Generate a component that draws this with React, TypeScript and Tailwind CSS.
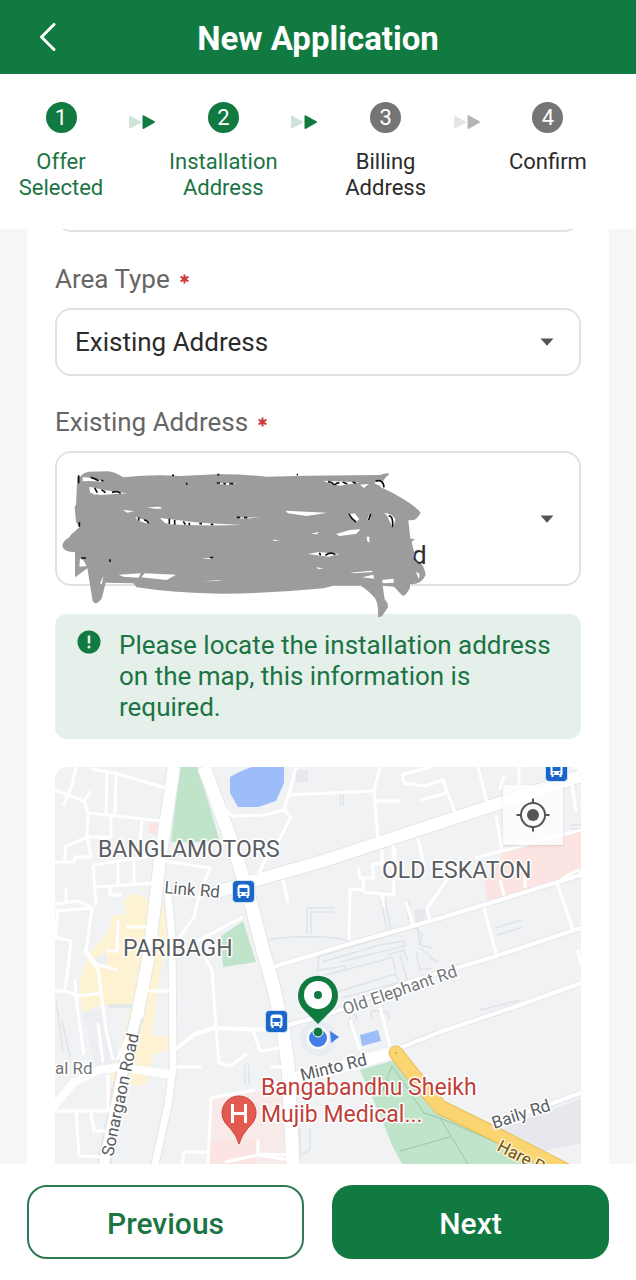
import React, { useState } from 'react';

interface Step {
    label: string;
    done: boolean;
}

const STEPS: Step[] = [
    { label: 'Offer Selected', done: true },
    { label: 'Installation Address', done: true },
    { label: 'Billing Address', done: false },
    { label: 'Confirm', done: false },
];

const StepArrow: React.FC<{ active: boolean }> = ({ active }) => (
    <svg
        width="28"
        height="16"
        viewBox="0 0 28 16"
        aria-hidden="true"
        className={active ? 'text-[#107a40]' : 'text-[#b5b5b5]'}
        fill="currentColor"
    >
        <path d="M1.5 1.5L13 7.5Q14 8 13 8.7L1.5 14.7Q1 15 1 14V2Q1 1 1.5 1.5Z" opacity={active ? 0.2 : 0.35} />
        <path d="M15.5 1.2L26.5 7.3Q27.6 8 26.5 8.7L15.5 14.9Q14.5 15.2 14.5 14V2Q14.5 1 15.5 1.2Z" />
    </svg>
);

const Stepper: React.FC = () => (
    <ol className="flex justify-between bg-white pl-[5px] pr-8 pt-7 pb-7 shrink-0">
        {STEPS.map((step, i) => (
            <React.Fragment key={step.label}>
                {i > 0 && (
                    <li aria-hidden="true" className="pt-3">
                        <StepArrow active={STEPS[i - 1].done} />
                    </li>
                )}
                <li className="w-[112px] flex flex-col items-center gap-4">
                    <span
                        className={`w-[31px] h-[31px] rounded-full flex items-center justify-center text-white text-[22px] leading-none ${
                            step.done ? 'bg-[#107a40]' : 'bg-[#757575]'
                        }`}
                    >
                        {i + 1}
                    </span>
                    <span
                        className={`text-[22px] leading-[26px] text-center ${
                            step.done ? 'text-[#1c7445]' : 'text-[#2b2b2b]'
                        }`}
                    >
                        {step.label}
                    </span>
                </li>
            </React.Fragment>
        ))}
    </ol>
);

const FieldLabel: React.FC<{ htmlFor: string; children: React.ReactNode }> = ({ htmlFor, children }) => (
    <label htmlFor={htmlFor} className="flex items-center gap-[10px] text-[26px] leading-8 text-[#666666]">
        {children}
        <svg width="9" height="10" viewBox="0 0 9 10" aria-hidden="true" stroke="#cf3a3f" strokeWidth="2">
            <path d="M4.5 0.5V9.5M0.6 2.7L8.4 7.3M8.4 2.7L0.6 7.3" />
        </svg>
    </label>
);

const Caret: React.FC = () => (
    <svg
        width="14"
        height="8"
        viewBox="0 0 14 8"
        aria-hidden="true"
        className="absolute right-[27px] top-1/2 -translate-y-1/2 pointer-events-none"
    >
        <path d="M0.5 0.5H13.5L7 7.8Z" fill="#555555" />
    </svg>
);

const Redaction: React.FC = () => (
    <svg
        width="375"
        height="170"
        viewBox="45 33 1125 510"
        aria-hidden="true"
        className="absolute left-0 top-0 pointer-events-none"
    >
        <path
            fill="#9c9c9c"
            d="M112 110L108 195L104 200L108 245L118 262L92 285L88 292Q66 305 67 318Q70 335 105 337L105 412L142 385L158 483Q166 496 175 486Q186 478 188 465L197 428L280 430L290 442Q400 459 545 461Q700 460 850 445L880 437H962Q990 455 1005 475Q1016 492 1014 530Q1022 534 1028 526L1044 502Q1046 490 1034 478L1028 437L1062 440L1086 466Q1092 470 1098 462L1110 445V432Q1142 436 1157 405Q1154 382 1142 368L1125 355L1115 305L1125 297L1111 296L1105 240Q1128 246 1142 218Q1128 198 1060 160L1020 140L1035 115L1048 102Q1042 97 1020 105L800 107L680 110Q600 102 530 103L420 108Q340 102 250 112Q225 96 205 94L145 95Q125 100 120 112Z"
        />
        <g fill="#ffffff">
            <path d="M128 112Q165 112 192 126Q155 122 128 124ZM148 140Q200 152 262 160L180 165L150 158ZM154 140L168 166L156 160ZM322 202L360 200L366 206H344ZM248 209L282 214L262 218ZM286 230L330 246L322 251L292 241ZM360 234L480 248L606 255Q470 258 388 253L374 248ZM578 233L660 232L616 236ZM736 212L862 218L800 228L744 220ZM522 128L590 130L560 135ZM850 122L960 127L900 137L868 130ZM1004 122H1034V142L1006 132ZM960 134L986 132L972 144Z" />
            <path d="M922 224L944 220L958 238L946 247ZM1032 218Q1056 220 1066 238L1060 266L1040 226ZM988 220L992 238L982 240ZM812 281L838 276L830 283ZM888 282L930 270L962 268L948 282L898 288ZM696 299L720 300L704 303ZM918 298L942 300ZM980 290H988V308L982 304ZM804 342L836 336L898 342L866 350ZM484 354L526 354L512 358ZM236 404L302 400L296 413L250 410ZM314 400L408 404L380 420L304 412ZM492 424L550 419L530 423ZM828 382L850 385L836 388ZM856 408L888 404ZM930 398L994 392L1000 396L944 400ZM966 412L1000 404L1002 416ZM1026 420L1060 416L1062 428L1028 430ZM1128 396Q1144 400 1136 416ZM118 380L140 378L130 360L120 356ZM180 430L190 408L186 432Z" />
        </g>
        <g stroke="#111111" strokeWidth="5" fill="none">
            <path d="M116 106V130M152 112Q166 116 176 122M184 120L190 124M164 144L172 158M184 150Q192 152 196 158M216 157Q232 152 242 160M388 236V252M404 240V254M430 244L436 254M448 248V256M478 251H486M512 253H520M296 232V242M312 240Q322 240 326 250M864 125L876 128Q882 138 890 130L898 128M908 126L922 132M938 126L948 130M1006 124Q1030 116 1032 142M926 222Q936 238 948 246M992 222L986 240M1046 228Q1060 226 1058 262M838 338L842 346M856 346Q872 334 886 344M118 246V260M124 354H138M210 358V366M510 353H520M530 129H540M550 130L558 133M568 131H580M590 232H600M612 233H622M396 106H402M532 104H538M770 104H774M440 128V134" />
        </g>
        <text x="1116" y="373" fontSize="78" fill="#2b2b2b" className="font-[Roboto]">
            d
        </text>
        <path d="M1108 296L1124 340L1120 358L1140 376L1110 380Z" fill="#9c9c9c" />
    </svg>
);

const BusStop: React.FC<{ x: number; y: number }> = ({ x, y }) => (
    <g transform={`translate(${x} ${y})`}>
        <rect x="-0.5" y="-0.5" width="22" height="22" rx="4" fill="#1b66c9" stroke="#ffffff" strokeOpacity="0.6" />
        <path
            fill="#ffffff"
            d="M7.500 3.500H13.500Q16.500 3.500 16.500 7V15H15.500V17H13.500V15H7.500V17H5.500V15H4.500V7Q4.500 3.500 7.500 3.500Z"
        />
        <path fill="#1b66c9" d="M6.500 7H14.500V11H6.500Z" />
        <circle cx="7.500" cy="13" r="1" fill="#1b66c9" />
        <circle cx="13.500" cy="13" r="1" fill="#1b66c9" />
    </g>
);

const MapDrawing: React.FC = () => (
    <svg viewBox="55 767 526 397" role="img" aria-label="Map" className="block w-full font-[Roboto]">
        <rect x="55" y="767" width="526" height="397" fill="#f0f2f4" />

        {/* Coloured areas */}
        <path fill="#e6e8ed" d="M497 1130L581 1099V1143L540 1152ZM415 910L425 908V920L416 922ZM605 768H620V782H605ZM296 770H308V782H296Z" />
        <path fill="#fdf3d3" d="M133 893L149 900L147 930L140 1005H100L82 1013L80 980L88 955L108 932L113 915H125L124 900ZM162 895L168 937L158 985L155 1013L152 1035L168 1037V1050L153 1055L146 1085H112L106 1050L116 1060L130 1010L140 975Z" />
        <path fill="#eceef1" d="M83 1013L100 1008L118 1058L112 1066L96 1066ZM92 960L106 952L108 968Z" />
        <path fill="#fce4e3" d="M150 822H162L160 838L148 832ZM484 885L503 853L540 843L581 831V872L500 898L487 901ZM110 1088H122L118 1110L110 1108ZM210 1142L256 1136V1164H208Z" />
        <path fill="#f9eaea" d="M212 1098L290 1088V1136L210 1142ZM258 1138H290V1164H258Z" />
        <path fill="#c0e4ca" d="M180 767H198L220 842H171ZM221 936L243 921L256 962L223 967Z" />
        <path fill="#9dbdf9" d="M230 777Q242 770 252 767H284V783L276 801L258 807H238L230 793ZM360 1035L378 1030L381 1041L362 1046Z" />
        <path fill="#c0e4ca" d="M360 1070L395 1060L415 1085L440 1108L540 1153L556 1164H402L392 1145L380 1115Z" />
        <path fill="none" stroke="#97c7a8" d="M392 1066L424 1113L440 1118L500 1144M440 1118L468 1164M400 1151L450 1137M392 1066L380 1098" />

        {/* Building outlines */}
        <g fill="none" stroke="#e0e3e7" strokeWidth="1.500">
            <path d="M307 934V908H334M311 934V912H334M268 940Q290 936 310 937Q330 936 348 941M381 900L387 931M385 900L391 930M409 902L408 920M415 910L420 945M319 955L318 970L345 966V970L335 972M322 962L380 945L404 941L405 946L340 962M320 956L415 928L422 935L420 945L432 948M325 975L380 961L392 957L396 972M388 955L404 950L408 962M400 955L407 980M416 952L420 970L432 968M420 948L438 962L428 958M312 1000L395 974L400 982L342 998M495 928L522 920M497 935L523 927M340 795V805M343 794V806M570 825H581M570 829H581" />
            <path d="M350 1018Q345 1028 354 1022Q360 1016 352 1014M372 1018Q368 1008 380 1012Q392 1010 388 1020M245 1065V1085M249 1065V1085M300 1128V1155L310 1150V1128M108 1005H140M108 1007H140M62 1020L70 1057M56 1000L63 1050M480 1010L520 1000" />
        </g>

        {/* Street edges */}
        <g fill="none" stroke="#e3e6ea" strokeLinejoin="round">
            <path strokeWidth="6" d="M273 967L349 944L427 922L490 903L581 875M285 1026L335 1012L400 985L493 957L581 928M397 1049L440 1032L520 1005L581 983M497 1123L581 1093" />
            <path strokeWidth="14" d="M174 767L160 860L149 955L137 1017L126 1055L104 1164M213 893L267 877L320 862L500 803L581 776" />
            <path strokeWidth="15" d="M204 767L233 845L250 900L263 950L273 985L283 1030L288 1065L293 1164" />
            <path strokeWidth="9" d="M167 885L172 937L173 1067L168 1105L155 1164" />
        </g>

        {/* Streets */}
        <g fill="none" stroke="#ffffff" strokeWidth="3" strokeLinejoin="round">
            <path d="M91 769L115 773L166 788M76 767L72 785L63 806M55 790L84 801L91 791M84 801L88 813L162 821M107 772L106 814M116 773L115 814M111 814V837L88 837L66 846L64 862H55M88 813L87 835L91 857H75L74 862H64M93 865L158 855M93 865L96 905M118 862V886M134 860V884M96 887L153 883M110 887V895H122M142 820L140 840" />
            <path d="M158 860L210 868L200 893L194 917L180 937M55 904L78 901L92 908L55 911M66 888V903M92 908L89 930L86 950L96 964L117 970M58 911L55 940M55 937L71 941L69 960L65 990M107 951H117L118 920M126 927H148M55 991H66L78 996L102 993M75 980L77 1005L84 1055M84 950L98 970L106 1030L113 1060M98 1023L103 1063M117 1060L130 1030M145 991H172M205 957L212 970L216 1028L219 1063L230 1066L247 1054M253 1030L260 1051L280 1048M173 1067H202M270 1067H288" />
            <path d="M108 1075V1112M55 1111H112M76 1111L79 1156L104 1157M91 1112L94 1131H107M208 1164L211 1098L255 1090M182 1164L184 1152H207M258 1140V1154L293 1155M225 1162L258 1155L290 1160" />
            <path d="M224 808L232 816L265 815L284 810L291 817L280 838L265 860L258 875M296 767L290 790L284 810M287 795L374 791L380 767M374 791L378 840M376 801H400M404 783L402 775L430 767M403 783L425 786L443 780L455 813M420 800L447 793M478 767L487 802M504 775L500 790M519 767V785M572 785L576 812M283 880L288 903M496 815L502 850M418 838L424 865" />
            <path d="M382 850V865H395V848M358 867L360 878H374L372 865L384 862M364 878L363 890L350 889L349 940M363 892L394 895L393 845M382 895L384 907M406 902L413 924M430 920L427 908L440 890L450 875M475 858L581 830M484 908L497 957M557 883L573 930M500 880L504 895M525 875V888M561 879L578 870L581 874" />
            <path d="M380 1007L390 1046M350 1020L360 1050M190 945L243 917M578 950L581 965" />
            <path strokeWidth="4" d="M273 967L349 944L427 922L490 903L581 875M285 1026L335 1012L400 985L493 957L581 928M397 1049L440 1032L520 1005L581 983M497 1123L581 1093M173 1051L195 1034L214 1028L268 1030" />
        </g>

        {/* Main roads */}
        <g fill="none" stroke="#ffffff" strokeLinejoin="round">
            <path strokeWidth="12" d="M174 767L160 860L149 955L137 1017" />
            <path strokeWidth="10" d="M137 1014L126 1055L104 1164" />
            <path strokeWidth="7" d="M167 885L172 937L173 1067L168 1105L155 1164" />
            <path strokeWidth="13" d="M204 767L233 845L250 900L263 950L273 985L283 1030L288 1065L293 1164" />
            <path strokeWidth="12" d="M213 893L267 877L320 862L500 803L581 776" />
            <path strokeWidth="8" d="M53 1108L73 1083L98 1070L120 1067L173 1075" />
            <path strokeWidth="12" d="M288 1080L345 1066L392 1053" />
        </g>
        <path fill="none" stroke="#e9bd59" strokeWidth="15" strokeLinecap="round" strokeLinejoin="round" d="M396 1053L410 1071L440 1107L497 1135L565 1170" />
        <path fill="none" stroke="#fcd573" strokeWidth="13" strokeLinecap="round" strokeLinejoin="round" d="M396 1053L410 1071L440 1107L497 1135L565 1170" />
        <circle cx="396" cy="1053" r="1" fill="#c99c3a" />

        {/* Place and street names */}
        <g fill="#5a5d61" stroke="#ffffff" strokeWidth="3" strokeLinejoin="round" paintOrder="stroke" fontSize="23">
            <text x="98" y="857">BANGLAMOTORS</text>
            <text x="382" y="878">OLD ESKATON</text>
            <text x="123" y="956">PARIBAGH</text>
            <g fontSize="17">
                <text x="164" y="893" transform="rotate(5 164 893)">Link Rd</text>
                <text x="55" y="1074" fill="#73767a">al Rd</text>
                <text x="113" y="1157" transform="rotate(-78 113 1157)">Sonargaon Road</text>
                <text x="345" y="1015" transform="rotate(-19 345 1015)" fill="#73767a">Old Elephant Rd</text>
                <text x="302" y="1081" transform="rotate(-14 302 1081)">Minto Rd</text>
                <text x="494" y="1129" transform="rotate(-18 494 1129)">Baily Rd</text>
                <text x="496" y="1150" transform="rotate(27 496 1150)" fill="#6a5322" stroke="#fff0c4">Hare R</text>
            </g>
            <g fill="#bf3f3a">
                <text x="261" y="1095">Bangabandhu Sheikh</text>
                <text x="261" y="1122">Mujib Medical...</text>
            </g>
        </g>

        <BusStop x={233} y={881} />
        <BusStop x={266} y={1011} />
        <BusStop x={546} y={760} />

        {/* Hospital pin */}
        <path fill="#e25a50" stroke="#c9453d" d="M239 1144Q237 1136 230 1128Q222 1121 222 1113A17 17 0 0 1 256 1113Q256 1121 248 1128Q241 1136 239 1144Z" />
        <path fill="none" stroke="#ffffff" strokeWidth="3" d="M232.500 1104V1123M245.500 1104V1123M232.500 1113.500H245.500" />

        {/* Current position and the chosen spot */}
        <circle cx="318" cy="1038" r="18" fill="#4a80e8" opacity="0.04" />
        <circle cx="318" cy="1038" r="11" fill="#ffffff" />
        <circle cx="318" cy="1038" r="9" fill="#437ee6" />
        <path fill="#437ee6" d="M330 1031L339 1037L331 1043Z" />
        <circle cx="318" cy="1032" r="5" fill="#107a40" stroke="#ffffff" />
        <path fill="#107a40" d="M318 1024L304 1010A20 20 0 1 1 332 1010Z" />
        <circle cx="318" cy="995" r="14" fill="#ffffff" />
        <circle cx="318" cy="995" r="4" fill="#107a40" />
    </svg>
);

export default function App() {
    const [areaType, setAreaType] = useState('existing');

    return (
        <div className="h-screen flex flex-col bg-[#f6f6f6] font-[Roboto,sans-serif]">
            {/* Header */}
            <header className="grid grid-cols-[95px_1fr_95px] items-center bg-[#107a40] text-white h-[74px] pt-1 shrink-0">
                <button type="button" aria-label="Back" className="justify-self-center pb-1">
                    <svg width="18" height="28" viewBox="0 0 18 28" fill="none" stroke="currentColor" strokeWidth="3" strokeLinecap="round" strokeLinejoin="round">
                        <path d="M15 1.500L2.500 14L15 26.500" />
                    </svg>
                </button>
                <h1 className="text-center text-[33px] leading-10 font-bold">New Application</h1>
            </header>

            <Stepper />

            {/* Form */}
            <main className="flex-1 min-h-0 overflow-hidden mx-[27px] px-7 bg-white flex flex-col">
                <input
                    type="text"
                    aria-label="Address details"
                    className="-mt-[65px] h-[68px] shrink-0 w-full rounded-2xl border-2 border-[#e2e2e2] bg-white px-5 text-[26px]"
                />

                <div className="mt-[31px] flex flex-col gap-[13px]">
                    <FieldLabel htmlFor="area-type">Area Type</FieldLabel>
                    <div className="relative">
                        <select
                            id="area-type"
                            value={areaType}
                            onChange={(e) => setAreaType(e.target.value)}
                            className="appearance-none block w-full h-[68px] rounded-2xl border-2 border-[#e2e2e2] bg-white px-[18px] text-[26px] text-[#2b2b2b]"
                        >
                            <option value="existing">Existing Address</option>
                        </select>
                        <Caret />
                    </div>
                </div>

                <div className="mt-[30px] flex flex-col gap-[13px]">
                    <FieldLabel htmlFor="existing-address">Existing Address</FieldLabel>
                    <div className="relative">
                        <select
                            id="existing-address"
                            className="appearance-none block w-full h-[135px] rounded-2xl border-2 border-[#e2e2e2] bg-white px-[18px] text-[26px] text-[#2b2b2b]"
                        >
                            <option value="" />
                        </select>
                        <Caret />
                        <Redaction />
                    </div>
                </div>

                <div className="mt-7 shrink-0 flex gap-[18px] rounded-xl bg-[#e5f0ea] py-4 pl-[22px] pr-4">
                    <svg width="24" height="24" viewBox="0 0 24 24" aria-hidden="true" className="shrink-0">
                        <circle cx="12" cy="12" r="11.500" fill="#107a40" />
                        <path d="M12 5.500V13.500" stroke="#e5f0ea" strokeWidth="2.600" />
                        <circle cx="12" cy="17" r="1.500" fill="#e5f0ea" />
                    </svg>
                    <p className="text-[26px] leading-[31px] text-[#1c7445]">
                        Please locate the installation address on the map, this information is required.
                    </p>
                </div>

                <div className="mt-7 relative flex-1 min-h-0 overflow-hidden rounded-t-xl">
                    <MapDrawing />
                    <button
                        type="button"
                        aria-label="My location"
                        className="absolute right-[18px] top-[18px] w-[60px] h-[60px] flex items-center justify-center rounded-xs bg-white/80 shadow"
                    >
                        <svg width="34" height="34" viewBox="0 0 34 34" fill="none" stroke="#555555" strokeWidth="2">
                            <circle cx="17" cy="17" r="12" />
                            <circle cx="17" cy="17" r="6" fill="#555555" stroke="none" />
                            <path d="M17 0.500V5M17 29V33.500M0.500 17H5M29 17H33.500" />
                        </svg>
                    </button>
                </div>
            </main>

            {/* Actions */}
            <footer className="shrink-0 grid grid-cols-2 gap-7 bg-white px-[27px] pt-[21px] pb-[21px]">
                <button
                    type="button"
                    className="h-[74px] rounded-[20px] border-2 border-[#2f7a53] bg-white pt-0.5 text-[30px] font-medium text-[#1c7445]"
                >
                    Previous
                </button>
                <button type="button" className="h-[74px] rounded-[20px] bg-[#107a40] pt-0.5 text-[30px] font-medium text-white">
                    Next
                </button>
            </footer>
        </div>
    );
}
